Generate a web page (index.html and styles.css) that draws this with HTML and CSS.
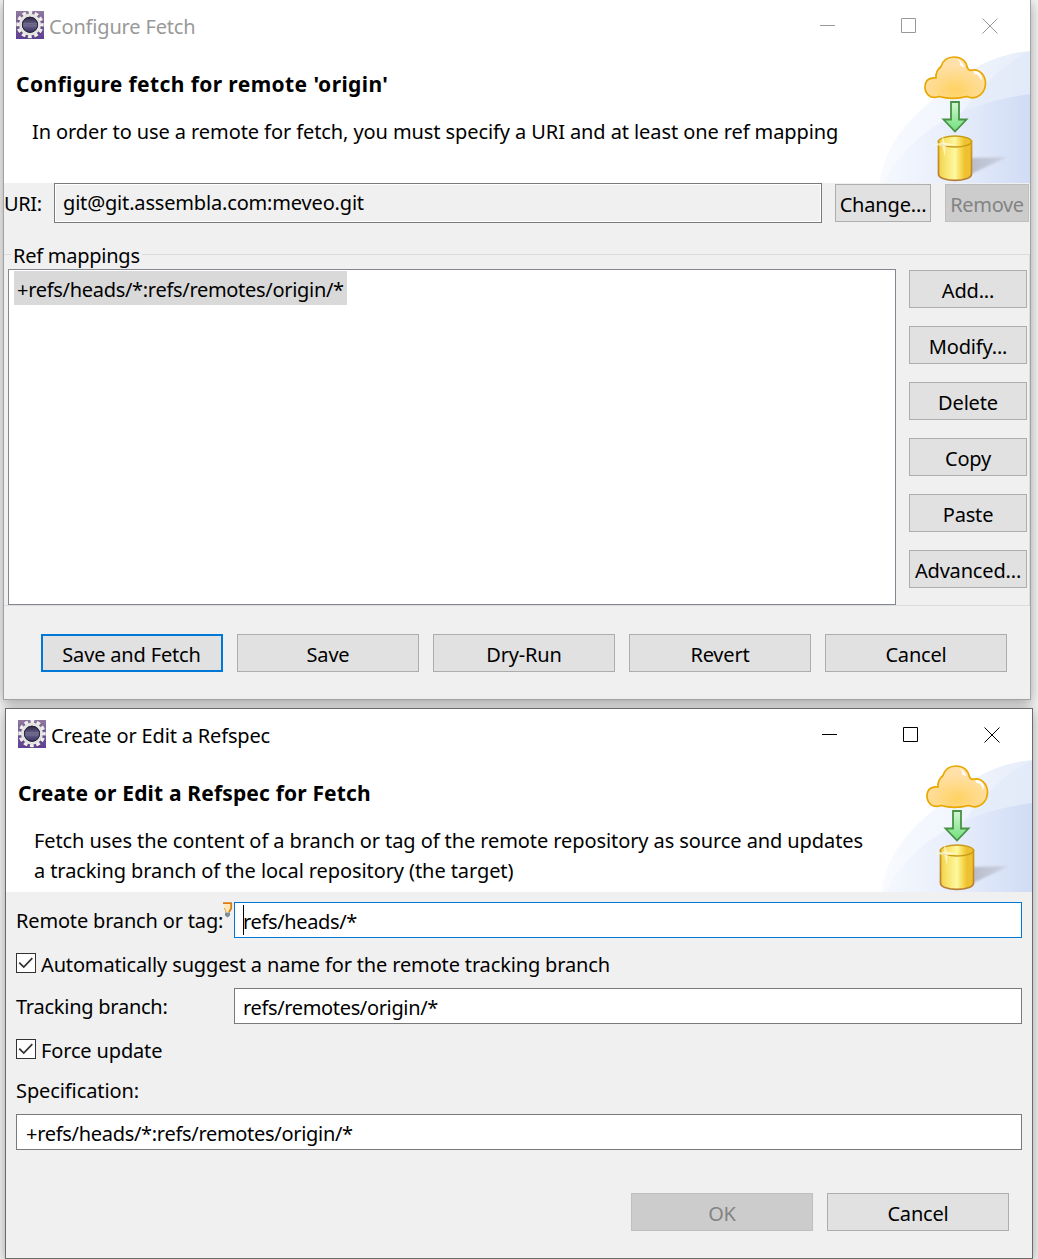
FILE: index.html
```html
<!DOCTYPE html>
<html lang="en">
<head>
    <meta charset="UTF-8">
    <meta name="viewport" content="width=device-width, initial-scale=1.0">
    <title>Configure Fetch</title>
    <link rel="stylesheet" href="styles.css">
</head>
<body>
    <!-- shared artwork -->
    <svg class="defs" width="0" height="0">
        <defs>
            <linearGradient id="purple" x1="0" y1="0" x2="0" y2="1">
                <stop offset="0" stop-color="#8f789f"/>
                <stop offset="1" stop-color="#5f3f94"/>
            </linearGradient>
            <linearGradient id="lens" x1="0" y1="0" x2="0" y2="1">
                <stop offset="0" stop-color="#2c2745"/>
                <stop offset=".5" stop-color="#6b658c"/>
                <stop offset="1" stop-color="#39305f"/>
            </linearGradient>
            <linearGradient id="sky1" x1="0" y1="0" x2="1" y2="0">
                <stop offset="0" stop-color="#f8fafe"/>
                <stop offset=".5" stop-color="#f1f5fd"/>
                <stop offset="1" stop-color="#e6edfa"/>
            </linearGradient>
            <linearGradient id="sky2" x1="0" y1="0" x2="1" y2="0">
                <stop offset="0" stop-color="#f5f8fe"/>
                <stop offset=".5" stop-color="#e6edfb"/>
                <stop offset="1" stop-color="#d0dcf5"/>
            </linearGradient>
            <radialGradient id="cloudFill" cx=".5" cy=".8" r=".6">
                <stop offset="0" stop-color="#ffd262"/>
                <stop offset="1" stop-color="#ffe0a8"/>
            </radialGradient>
            <linearGradient id="arrowFill" x1="0" y1="0" x2="0" y2="1">
                <stop offset="0" stop-color="#d3f6d4"/>
                <stop offset="1" stop-color="#6fe07a"/>
            </linearGradient>
            <linearGradient id="gold" x1="0" y1="0" x2="1" y2="0">
                <stop offset="0" stop-color="#f2d04a"/>
                <stop offset=".2" stop-color="#f8e36c"/>
                <stop offset=".5" stop-color="#fdf8a0"/>
                <stop offset=".68" stop-color="#f5d850"/>
                <stop offset=".8" stop-color="#efc02e"/>
                <stop offset="1" stop-color="#efc136"/>
            </linearGradient>
            <linearGradient id="goldEdge" x1="0" y1="0" x2="0" y2="1">
                <stop offset="0" stop-color="#cf9f12"/>
                <stop offset="1" stop-color="#b87c34"/>
            </linearGradient>
            <linearGradient id="shade" x1="0" y1="0" x2="1" y2="0">
                <stop offset="0" stop-color="#b9bdca"/>
                <stop offset="1" stop-color="#ccd3e6"/>
            </linearGradient>
            <filter id="soft"><feGaussianBlur stdDeviation=".8"/></filter>

            <symbol id="gear" viewBox="0 0 28 28">
                <rect width="28" height="28" fill="url(#purple)"/>
                <circle cx="14" cy="14.6" r="11.8" fill="none" stroke="#4c3f5e" stroke-width="4" stroke-dasharray="3.7 2.479" stroke-dashoffset="1.85" opacity=".7"/>
                <circle cx="14" cy="13.6" r="11.8" fill="none" stroke="#eeeeea" stroke-width="3.8" stroke-dasharray="3.7 2.479" stroke-dashoffset="1.85"/>
                <circle cx="14" cy="13.6" r="9.4" fill="#27213d" stroke="#e4e4e0" stroke-width="3"/>
                <circle cx="14" cy="13.8" r="7.6" fill="url(#lens)" stroke="#27213d" stroke-width="1"/>
                <path d="M7 12.500h14M7 15h14" stroke="#8c88a6" stroke-width="1" opacity=".4"/>
            </symbol>

            <symbol id="banner" viewBox="0 0 150 132">
                <path d="M0 132C3 100 23 72 54 48C86 18 116 3 150 0V132Z" fill="url(#sky1)"/>
                <path d="M4 132C24 103 46 88 74 72C94 44 119 14 150 1V132Z" fill="#dce6f8" opacity=".4"/>
                <path d="M4 132C30 78 88 51 150 43V132Z" fill="url(#sky2)"/>
                <path d="M91 107L127 106L91 123Z" fill="url(#shade)" filter="url(#soft)"/>
                <path d="M56 27C55.500 22 58 18 61 15.500C63 9 68 6 74 6C81 6 86 10 87.500 17C89.500 20 90 19.500 92 19C100 17.500 105.500 25 105.500 32C105.500 42 97 50 87 45.500C77 48 68 48 59 45.500C50 49 45 42 45 36C45 29 50 26 56 27Z" fill="url(#cloudFill)" stroke="#e9a800" stroke-width="1.700"/>
                <path d="M77 8C82 10 84 14 84 17C82 15 81 14 79 15C82 12 79 10 77 8ZM94 20C101 20 103 26 101 30C100 25 98 23 94 23Z" fill="#fff"/>
                <path d="M71 51H79V68.500H86.500L75 80.500L63.500 68.500H71Z" fill="url(#arrowFill)" stroke="#479244" stroke-width="1.800"/>
                <path d="M58.500 90V123C58.500 131.500 91.500 131.500 91.500 123V90Z" fill="url(#gold)" stroke="url(#goldEdge)" stroke-width="1.700"/>
                <ellipse cx="75" cy="90.500" rx="16.500" ry="5.500" fill="url(#gold)" stroke="#cb9b16" stroke-width="1.500"/>
                <path d="M62 81L64.500 91.500L74 93.500L65.500 95L65 106L62.500 95L52 93.500L62.500 91.500Z" fill="#fffbe2" opacity=".75"/>
            </symbol>
        </defs>
    </svg>

    <div class="window inactive">
        <div class="titlebar">
            <svg class="app-icon"><use href="#gear"/></svg>
            <span class="title">Configure Fetch</span>
            <svg class="controls" width="180" height="18" viewBox="0 0 180 18">
                <path d="M1 8.500h15M82.500 1.500h14v14h-14zM163.500 1.500l15 15M178.500 1.500l-15 15"/>
            </svg>
        </div>
        <div class="header">
            <div class="header-text">
                <h1>Configure fetch for remote 'origin'</h1>
                <p>In order to use a remote for fetch, you must specify a URI and at least one ref mapping</p>
            </div>
            <svg class="banner"><use href="#banner"/></svg>
        </div>
        <div class="uri-row">
            <label class="uri-label">URI:</label>
            <div class="uri-field">git@git.assembla.com:meveo.git</div>
            <button class="change">Change...</button>
            <button class="remove" disabled>Remove</button>
        </div>
        <fieldset class="mappings">
            <legend>Ref mappings</legend>
            <div class="list"><span class="selected spec">+refs/heads/*:refs/remotes/origin/*</span></div>
            <div class="side-buttons">
                <button>Add...</button>
                <button>Modify...</button>
                <button>Delete</button>
                <button>Copy</button>
                <button>Paste</button>
                <button>Advanced...</button>
            </div>
        </fieldset>
        <div class="actions">
            <button class="default">Save and Fetch</button>
            <button>Save</button>
            <button>Dry-Run</button>
            <button>Revert</button>
            <button>Cancel</button>
        </div>
    </div>

    <div class="window refspec">
        <div class="titlebar">
            <svg class="app-icon"><use href="#gear"/></svg>
            <span class="title">Create or Edit a Refspec</span>
            <svg class="controls" width="180" height="18" viewBox="0 0 180 18">
                <path d="M1 8.500h15M82.500 1.500h14v14h-14zM163.500 1.500l15 15M178.500 1.500l-15 15"/>
            </svg>
        </div>
        <div class="header">
            <div class="header-text">
                <h1>Create or Edit a Refspec for Fetch</h1>
                <p>Fetch uses the content of a branch or tag of the remote repository as source and updates<br>a tracking branch of the local repository (the target)</p>
            </div>
            <svg class="banner"><use href="#banner"/></svg>
        </div>
        <div class="form">
            <div class="form-row">
                <label class="remote-label">Remote branch or tag:</label>
                <svg class="bulb" width="10" height="16" viewBox="0 0 10 16">
                    <path d="M0 1.500H8.500V6.500L6 11H3.500L1.500 6Z" fill="#ffe9bd"/>
                    <path d="M0 1.200H8.200V6.500L6 10" fill="none" stroke="#dc7a12" stroke-width="1.800"/>
                    <path d="M1.500 6L3 10" fill="none" stroke="#e79a3b"/>
                    <path d="M2 10.500h5v3l-2.500 2l-2.500-2z" fill="#7f8b94"/>
                </svg>
                <div class="field focused"><span class="caret"></span>refs/heads/*</div>
            </div>
            <div class="check-row">
                <svg class="checkbox" viewBox="0 0 20 20"><path d="M2.500 9.500L7.500 14.500L17 4.500"/></svg>
                <label>Automatically suggest a name for the remote tracking branch</label>
            </div>
            <div class="form-row">
                <label>Tracking branch:</label>
                <div class="field">refs/remotes/origin/*</div>
            </div>
            <div class="check-row">
                <svg class="checkbox" viewBox="0 0 20 20"><path d="M2.500 9.500L7.500 14.500L17 4.500"/></svg>
                <label>Force update</label>
            </div>
            <label class="spec-label">Specification:</label>
            <div class="field spec">+refs/heads/*:refs/remotes/origin/*</div>
            <div class="actions">
                <button disabled>OK</button>
                <button>Cancel</button>
            </div>
        </div>
    </div>
</body>
</html>
```
FILE: styles.css
```css
* {
    box-sizing: border-box;
}
body {
    margin: 0;
    height: 1259px;
    overflow: hidden;
    background-color: #f4f4f4;
    font-family: "Noto Sans", "Open Sans", sans-serif;
    font-size: 20px;
    line-height: 30px;
    letter-spacing: -0.17px;
    color: #000;
}
.defs {
    display: block;
}
.window {
    width: 1028px;
    margin-left: 3px;
    background-color: #f0f0f0;
    border: 1px solid #a3a3a3;
    box-shadow: 0 3px 12px rgba(0,0,0,0.35);
}
.inactive {
    height: 700px;
    border-top: none;
}
.refspec {
    height: 551px;
    margin: 8px 0 0 5px;
    border-color: #6b6b6b;
}
.titlebar {
    display: flex;
    align-items: center;
    height: 51px;
    padding: 0 31px 0 12px;
    background-color: #fff;
}
.app-icon {
    width: 28px;
    height: 28px;
    margin-bottom: 2px;
}
.title {
    margin-left: 5px;
    padding-top: 3px;
}
.inactive .title {
    color: #999;
}
.controls {
    margin-left: auto;
    fill: none;
    stroke: #000;
    stroke-width: 1;
}
.inactive .controls {
    stroke: #999;
}
.header {
    display: flex;
    justify-content: space-between;
    height: 132px;
    padding-left: 12px;
    background-color: #fff;
}
.header-text {
    flex: 1;
    padding-top: 18px;
}
h1 {
    margin: 0;
    font-size: 21px;
    line-height: 30px;
    letter-spacing: 0.4px;
}
.refspec h1 {
    letter-spacing: 0.16px;
}
p {
    margin: 18px -20px 0 16px;
    letter-spacing: -0.09px;
    white-space: nowrap;
}
.banner {
    width: 150px;
    height: 132px;
}
button {
    width: 182px;
    height: 38px;
    padding: 3px 0 0;
    font: inherit;
    letter-spacing: inherit;
    line-height: 32px;
    color: #000;
    background-color: #e1e1e1;
    border: 1px solid #adadad;
    border-radius: 0;
    white-space: nowrap;
}
button:disabled {
    color: #838383;
    background-color: #ccc;
    border-color: #bfbfbf;
}
.default {
    padding: 3px 1px 0 0;
    border: 2px solid #0078d7;
}
.uri-row {
    display: flex;
    height: 40px;
}
.uri-label {
    width: 50px;
    padding-top: 6px;
    letter-spacing: -0.35px;
}
.uri-field {
    width: 768px;
    height: 40px;
    padding: 4px 8px;
    border: 1px solid #7a7a7a;
    box-shadow: inset 0 0 0 1px #fff;
}
.change {
    width: 96px;
    margin: 1px 14px 0 13px;
}
.remove {
    width: 84px;
    margin-top: 1px;
    letter-spacing: -0.35px;
}
.mappings {
    display: flex;
    justify-content: space-between;
    height: 366px;
    margin: 17px 0 0;
    padding: 0 2px 0 4px;
    border: 1px solid #dcdcdc;
    border-left: none;
}
legend {
    height: 29px;
    margin-left: 3px;
    padding: 1px 2px 0;
    letter-spacing: -0.25px;
}
.list {
    width: 888px;
    height: 336px;
    padding: 1px 5px;
    background-color: #fff;
    border: 1px solid #828790;
}
.selected {
    display: inline-block;
    height: 34px;
    padding: 4px 3px 0;
    background-color: #d9d9d9;
}
.side-buttons {
    display: flex;
    flex-direction: column;
    gap: 18px;
    padding-top: 1px;
}
.side-buttons button {
    width: 118px;
}
.actions {
    display: flex;
    gap: 14px;
    margin: 28px 0 0 37px;
}
.form {
    padding: 10px 10px 0 10px;
}
.form-row {
    display: flex;
    justify-content: space-between;
    height: 36px;
}
.form-row label {
    padding-top: 4px;
    letter-spacing: -0.25px;
}
.form-row .field {
    width: 788px;
    letter-spacing: -0.35px;
}
.form-row .remote-label {
    width: 207px;
    letter-spacing: -0.17px;
    white-space: nowrap;
}
.bulb {
    margin-left: -1px;
}
.field {
    height: 36px;
    padding: 4px 8px 0;
    background-color: #fff;
    border: 1px solid #7a7a7a;
}
.form .spec {
    padding-left: 9px;
}
.spec {
    letter-spacing: -0.3px;
}
.form-row .focused {
    border-color: #0078d7;
}
.caret {
    display: inline-block;
    width: 1px;
    height: 30px;
    margin: -2px -1px 0 0;
    vertical-align: top;
    background-color: #000;
}
.check-row {
    display: flex;
    align-items: center;
    height: 50px;
}
.check-row label {
    margin: 4px 0 0 5px;
    letter-spacing: -0.15px;
}
.checkbox {
    width: 20px;
    height: 20px;
    border: 1px solid #333;
    background-color: #fff;
    fill: none;
    stroke: #333;
    stroke-width: 2;
}
.spec-label {
    display: block;
    height: 40px;
    padding-top: 2px;
    letter-spacing: -0.1px;
}
.form .actions {
    margin: 43px 13px 0 0;
    justify-content: flex-end;
}
```
